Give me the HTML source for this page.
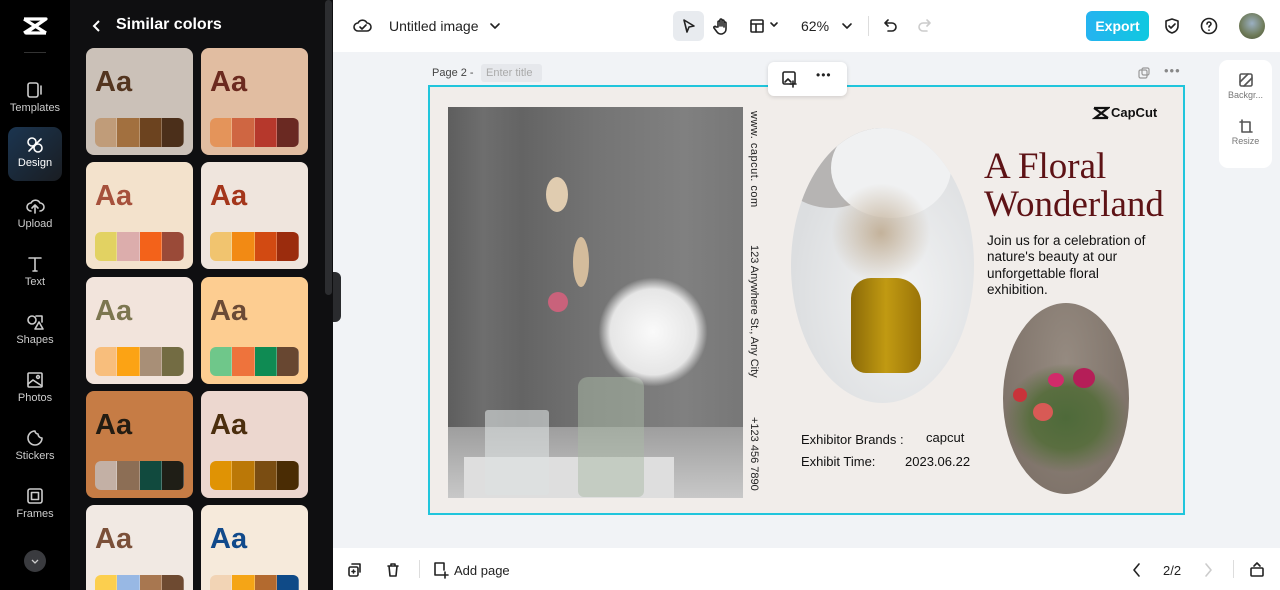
<!DOCTYPE html>
<html style="overflow:hidden;width:1280px;height:590px"><head><meta charset="utf-8"><style>
*{margin:0;padding:0;box-sizing:border-box}
body{width:1280px;height:590px;overflow:hidden;font-family:"Liberation Sans",sans-serif;background:#f1f3f6;position:relative}
.abs{position:absolute}
#side{left:0;top:0;width:70px;height:590px;background:#000}
.nav{position:absolute;left:8px;width:54px;height:54px;color:#ccc;font-size:11px;text-align:center}
.nav svg{display:block;margin:8px auto 2px}
#panel{left:70px;top:0;width:263px;height:590px;background:#0f0f11;overflow:hidden}
.card{position:absolute;width:107px;height:107px;border-radius:8px}
.card b{position:absolute;left:9px;top:18px;font-size:29px;font-weight:bold}
.sw{position:absolute;left:9px;top:70px;width:89px;height:29px;border-radius:6px;overflow:hidden;display:flex}
.sw i{flex:1;border-right:1px solid rgba(255,255,255,.25)}
#top{left:333px;top:0;width:947px;height:52px;background:#fff}
#bot{left:333px;top:548px;width:947px;height:42px;background:#fff}
.ic{stroke:#222;fill:none;stroke-width:1.6;stroke-linecap:round;stroke-linejoin:round}
</style></head><body>
<div id="side" class="abs">
 <svg class="abs" style="left:22px;top:16px" width="26" height="20" viewBox="0 0 26 20"><path d="M2 3h22L4 17h20M2 3l22 14M2 17L24 3" stroke="#fff" stroke-width="3.2" fill="none" stroke-linejoin="round"/></svg>
 <div class="abs" style="left:24px;top:52px;width:22px;height:1px;background:#333"></div>
 <div class="nav" style="top:72px"><svg width="20" height="20" class="ic" style="stroke:#ccc"><rect x="3" y="3" width="10" height="14" rx="2"/><path d="M16 6v8"/></svg>Templates</div>
 <div class="nav" style="top:127px;background:linear-gradient(135deg,#1b3550,#1a1d22);border-radius:9px;color:#fff"><svg width="20" height="20" class="ic" style="stroke:#fff"><circle cx="7" cy="7" r="4"/><circle cx="13" cy="13" r="4"/><path d="M4 16l12-12"/></svg>Design</div>
 <div class="nav" style="top:188px"><svg width="20" height="20" class="ic" style="stroke:#ccc"><path d="M6 15a4 4 0 010-8 5 5 0 019 0 4 4 0 010 8M10 9v8M7 12l3-3 3 3"/></svg>Upload</div>
 <div class="nav" style="top:246px"><svg width="20" height="20" class="ic" style="stroke:#ccc"><path d="M4 4h12M10 4v13M8 17h4"/></svg>Text</div>
 <div class="nav" style="top:304px"><svg width="20" height="20" class="ic" style="stroke:#ccc"><circle cx="7" cy="8" r="4"/><path d="M11 4h6v6M10 17l4-7 4 7z"/></svg>Shapes</div>
 <div class="nav" style="top:362px"><svg width="20" height="20" class="ic" style="stroke:#ccc"><rect x="3" y="3" width="14" height="14" rx="1"/><path d="M3 14l5-4 9 6"/><circle cx="13" cy="7" r="1.4"/></svg>Photos</div>
 <div class="nav" style="top:420px"><svg width="20" height="20" class="ic" style="stroke:#ccc"><path d="M10 3a7 7 0 107 7 4 4 0 01-4-4 3 3 0 01-3-3z"/></svg>Stickers</div>
 <div class="nav" style="top:478px"><svg width="20" height="20" class="ic" style="stroke:#ccc"><rect x="3" y="3" width="14" height="14" rx="2"/><rect x="6.5" y="6.5" width="7" height="7"/></svg>Frames</div>
 <div class="abs" style="left:24px;top:550px;width:22px;height:22px;border-radius:50%;background:#3a3b3f"><svg width="22" height="22" viewBox="0 0 22 22"><path d="M8 10l3 3 3-3" stroke="#ccc" fill="none" stroke-width="1.3"/></svg></div>
</div>
<div id="panel" class="abs">
 <svg class="abs" style="left:20px;top:18px" width="14" height="16"><path d="M9 3L4 8l5 5" stroke="#fff" stroke-width="2" fill="none"/></svg>
 <div class="abs" style="left:46px;top:16px;color:#fff;font-size:16px;font-weight:bold">Similar colors</div>
 <div class="abs" style="left:255px;top:0;width:7px;height:295px;background:#2c2d30;border-radius:4px"></div>
 <div class="card" style="left:16px;top:48px;background:#cbc1b8"><b style="color:#53351f">Aa</b><div class="sw"><i style="background:#c09c79"></i><i style="background:#a2703f"></i><i style="background:#6c431f"></i><i style="background:#4b2f1a"></i></div></div>
 <div class="card" style="left:131px;top:48px;background:#e1bda1"><b style="color:#6b2a1f">Aa</b><div class="sw"><i style="background:#e4945a"></i><i style="background:#cf6642"></i><i style="background:#b6382c"></i><i style="background:#6a2922"></i></div></div>
 <div class="card" style="left:16px;top:162px;background:#f3e2cc"><b style="color:#a6513c">Aa</b><div class="sw"><i style="background:#e2d262"></i><i style="background:#dcadac"></i><i style="background:#f3621a"></i><i style="background:#9a4a38"></i></div></div>
 <div class="card" style="left:131px;top:162px;background:#efe5dd"><b style="color:#a4361b">Aa</b><div class="sw"><i style="background:#f1c46f"></i><i style="background:#f28a14"></i><i style="background:#d24a12"></i><i style="background:#9b2c0d"></i></div></div>
 <div class="card" style="left:16px;top:277px;background:#f2e4dc"><b style="color:#7c7650">Aa</b><div class="sw"><i style="background:#f8be7c"></i><i style="background:#fca314"></i><i style="background:#a88f77"></i><i style="background:#736c43"></i></div></div>
 <div class="card" style="left:131px;top:277px;background:#fdcd91"><b style="color:#6b4a36">Aa</b><div class="sw"><i style="background:#6fc78a"></i><i style="background:#ee733c"></i><i style="background:#0f8b53"></i><i style="background:#684731"></i></div></div>
 <div class="card" style="left:16px;top:391px;background:#c67c45"><b style="color:#231c12">Aa</b><div class="sw"><i style="background:#c3b0a5"></i><i style="background:#8c6e55"></i><i style="background:#114a3e"></i><i style="background:#1f1e16"></i></div></div>
 <div class="card" style="left:131px;top:391px;background:#ecd7cf"><b style="color:#4b2e0e">Aa</b><div class="sw"><i style="background:#e09304"></i><i style="background:#bb7807"></i><i style="background:#7a4d12"></i><i style="background:#4a2c04"></i></div></div>
 <div class="card" style="left:16px;top:505px;background:#f1e9e3"><b style="color:#7b5039">Aa</b><div class="sw"><i style="background:#fccf4e"></i><i style="background:#98b8e4"></i><i style="background:#a87750"></i><i style="background:#6e4a31"></i></div></div>
 <div class="card" style="left:131px;top:505px;background:#f6eadb"><b style="color:#114a8b">Aa</b><div class="sw"><i style="background:#f2d4b5"></i><i style="background:#f5a516"></i><i style="background:#b36a2f"></i><i style="background:#0f4a87"></i></div></div>
</div>
<div class="abs" style="left:333px;top:272px;width:8px;height:50px;background:#2a2b2e;border-radius:0 6px 6px 0"></div>
<div id="top" class="abs">
 <svg class="abs" style="left:20px;top:16px" width="20" height="20"><path class="ic" d="M5 15a4 4 0 010-8 5 5 0 019 0 4 4 0 010 8z M7 11l2 2 4-4"/></svg>
 <div class="abs" style="left:56px;top:18px;font-size:14px;color:#222">Untitled image</div>
 <svg class="abs" style="left:156px;top:20px" width="12" height="12"><path class="ic" d="M2 4l4 4 4-4"/></svg>
 <div class="abs" style="left:340px;top:11px;width:31px;height:30px;background:#e8ebef;border-radius:6px"></div>
 <svg class="abs" style="left:347px;top:17px" width="18" height="18"><path class="ic" d="M4 3l10 6-5 1-2 5z"/></svg>
 <svg class="abs" style="left:379px;top:16px" width="20" height="20"><path class="ic" d="M6 11V6a1 1 0 012 0v4V4a1 1 0 012 0v6V5a1 1 0 012 0v6V7a1 1 0 012 0v6a5 5 0 01-9 3l-3-4a1 1 0 012-1z"/></svg>
 <svg class="abs" style="left:415px;top:17px" width="18" height="18"><rect class="ic" x="3" y="3" width="12" height="12" rx="1"/><path class="ic" d="M3 7h12M8 7v8"/></svg>
 <svg class="abs" style="left:436px;top:20px" width="10" height="10"><path class="ic" d="M2 3l3 3 3-3"/></svg>
 <div class="abs" style="left:468px;top:18px;font-size:14px;color:#222">62%</div>
 <svg class="abs" style="left:508px;top:20px" width="12" height="12"><path class="ic" d="M2 4l4 4 4-4"/></svg>
 <div class="abs" style="left:535px;top:16px;width:1px;height:20px;background:#ddd"></div>
 <svg class="abs" style="left:549px;top:16px" width="18" height="20"><path class="ic" d="M6 4L3 7l3 3M3 7h7a4 4 0 010 8H6"/></svg>
 <svg class="abs" style="left:582px;top:16px" width="18" height="20"><path class="ic" style="stroke:#ccc" d="M12 4l3 3-3 3M15 7H8a4 4 0 000 8h4"/></svg>
 <div class="abs" style="left:753px;top:11px;width:63px;height:30px;border-radius:6px;background:linear-gradient(90deg,#25b3f0,#10c8e0);color:#fff;font-weight:bold;font-size:14px;text-align:center;line-height:30px">Export</div>
 <svg class="abs" style="left:829px;top:16px" width="20" height="20"><path class="ic" d="M10 3l6 2v5c0 4-3 6-6 7-3-1-6-3-6-7V5z M7 10l2 2 4-4"/></svg>
 <svg class="abs" style="left:866px;top:16px" width="20" height="20"><circle class="ic" cx="10" cy="10" r="7.5"/><path class="ic" d="M8 8a2 2 0 114 0c0 1.5-2 1.5-2 3M10 14v.2"/></svg>
 <div class="abs" style="left:906px;top:13px;width:26px;height:26px;border-radius:50%;background:radial-gradient(circle at 50% 40%,#9bb0c2,#6e7a58 60%,#4a5238)"></div>
</div>
<div class="abs" style="left:432px;top:67px;font-size:11px;color:#444">Page 2 -</div>
<div class="abs" style="left:481px;top:64px;width:61px;height:18px;background:#e6e8ec;border-radius:3px;font-size:11px;color:#aaa;line-height:18px;padding-left:5px">Enter title</div>
<svg class="abs" style="left:1137px;top:66px" width="14" height="14"><rect class="ic" style="stroke:#999;stroke-width:1.2" x="2" y="4" width="8" height="8" rx="1.5"/><rect class="ic" style="stroke:#999;stroke-width:1.2" x="5" y="2" width="7" height="7" rx="1.5"/></svg>
<div class="abs" style="left:1164px;top:63px;font-size:13px;color:#888;letter-spacing:1px">•••</div>
<div class="abs" style="left:1219px;top:60px;width:53px;height:108px;background:#fff;border-radius:9px;font-size:9px;color:#777;text-align:center">
 <svg style="display:block;margin:12px auto 2px" width="16" height="16"><rect class="ic" style="stroke:#555" x="2" y="2" width="12" height="12" rx="1.5"/><path class="ic" style="stroke:#555" d="M2 10l8-8M6 14l8-8"/></svg>Backgr...
 <svg style="display:block;margin:18px auto 2px" width="16" height="16"><path class="ic" style="stroke:#555" d="M4 2v12h10M2 4h10v10"/></svg>Resize
</div>
<div class="abs" style="left:428px;top:85px;width:757px;height:430px;border:2px solid #20c5dc;background:#f1edea;overflow:hidden">
 <div class="abs" style="left:18px;top:20px;width:295px;height:391px;background:linear-gradient(90deg,#5e5e5e 0%,#6e6e6e 12%,#646464 25%,#747474 50%,#808080 80%,#777 100%);overflow:hidden">
  <div class="abs" style="left:0;top:320px;width:295px;height:71px;background:linear-gradient(180deg,#9e9e9e,#c8c8c8)"></div>
  <div class="abs" style="left:16px;top:350px;width:210px;height:41px;background:#dedede"></div>
  <div class="abs" style="left:37px;top:303px;width:64px;height:85px;background:rgba(220,225,225,.6);border-radius:3px"></div>
  <div class="abs" style="left:130px;top:270px;width:66px;height:120px;background:rgba(170,185,165,.5);border-radius:10px 10px 6px 6px"></div>
  <div class="abs" style="left:150px;top:170px;width:110px;height:110px;border-radius:50%;background:radial-gradient(#fafafa,#e6e6e6 55%,rgba(255,255,255,0) 70%)"></div>
  <div class="abs" style="left:100px;top:185px;width:20px;height:20px;border-radius:50%;background:#c9627b"></div>
  <div class="abs" style="left:98px;top:70px;width:22px;height:35px;border-radius:50%;background:#e0ccb0"></div>
  <div class="abs" style="left:125px;top:130px;width:16px;height:50px;border-radius:50%;background:#d4bc9c"></div>
 </div>
 <div class="abs" style="left:318px;top:24px;font-size:11px;color:#222;writing-mode:vertical-rl;letter-spacing:.5px">www. capcut. com</div>
 <div class="abs" style="left:318px;top:158px;font-size:11px;color:#222;writing-mode:vertical-rl">123 Anywhere St., Any City</div>
 <div class="abs" style="left:318px;top:330px;font-size:11px;color:#222;writing-mode:vertical-rl">+123 456 7890</div>
 <div class="abs" style="left:361px;top:41px;width:183px;height:275px;border-radius:50%;background:radial-gradient(ellipse at 60% 60%,#f2f3f4,#dcdee0 70%);overflow:hidden">
  <div class="abs" style="left:-20px;top:-30px;width:120px;height:110px;border-radius:50%;background:#b6b4b3"></div>
  <div class="abs" style="left:40px;top:-10px;width:120px;height:100px;border-radius:50%;background:#f0f1f2"></div>
  <div class="abs" style="left:60px;top:150px;width:70px;height:95px;background:linear-gradient(90deg,#8b6a08,#c19a12,#9a7408);border-radius:20px 25px 15px 15px"></div>
  <div class="abs" style="left:40px;top:55px;width:100px;height:100px;border-radius:50%;background:radial-gradient(rgba(170,140,100,.6),rgba(200,180,150,0) 70%)"></div>
 </div>
 <div class="abs" style="left:573px;top:216px;width:126px;height:191px;border-radius:50%;background:radial-gradient(ellipse at 50% 30%,#958a80,#776b62);overflow:hidden">
  <div class="abs" style="left:0;top:60px;width:126px;height:110px;background:radial-gradient(ellipse,#4e6a3a 0%,#5a6e40 40%,rgba(110,100,90,0) 70%)"></div>
  <div class="abs" style="left:30px;top:100px;width:20px;height:18px;border-radius:50%;background:#d85a55"></div>
  <div class="abs" style="left:70px;top:65px;width:22px;height:20px;border-radius:50%;background:#b51e58"></div>
  <div class="abs" style="left:45px;top:70px;width:16px;height:14px;border-radius:50%;background:#d12b6a"></div>
  <div class="abs" style="left:10px;top:85px;width:14px;height:14px;border-radius:50%;background:#c9333a"></div>
 </div>
 <div class="abs" style="left:554px;top:61px;font-family:'Liberation Serif',serif;font-size:37px;line-height:38px;color:#5e1316;white-space:nowrap">A Floral<br>Wonderland</div>
 <div class="abs" style="left:557px;top:146px;font-size:13.5px;line-height:16.3px;color:#111;width:168px">Join us for a celebration of nature's beauty at our unforgettable floral exhibition.</div>
 <div class="abs" style="left:371px;top:345px;font-size:13px;color:#111">Exhibitor Brands :</div>
 <div class="abs" style="left:496px;top:343px;font-size:13px;color:#111">capcut</div>
 <div class="abs" style="left:371px;top:367px;font-size:13px;color:#111">Exhibit Time:</div>
 <div class="abs" style="left:475px;top:367px;font-size:13px;color:#111">2023.06.22</div>
 <svg class="abs" style="left:662px;top:19px" width="18" height="14" viewBox="0 0 18 14"><path d="M2 2h14L3 12h13M2 2l14 10" stroke="#111" stroke-width="2.2" fill="none"/></svg>
 <div class="abs" style="left:681px;top:18px;font-size:13px;font-weight:bold;color:#111">CapCut</div>
</div>
<div class="abs" style="left:768px;top:62px;width:79px;height:34px;background:#fff;border-radius:6px;box-shadow:0 1px 4px rgba(0,0,0,.15)">
 <svg class="abs" style="left:13px;top:8px" width="18" height="18"><rect class="ic" x="2" y="2" width="12" height="12" rx="1.5"/><path class="ic" d="M4 12l3-3 3 3M12 11v6M9 14h6"/></svg>
 <div class="abs" style="left:48px;top:6px;font-size:12px;letter-spacing:1px;color:#222">•••</div>
</div>
<div id="bot" class="abs">
 <svg class="abs" style="left:14px;top:14px" width="16" height="16"><rect class="ic" x="2" y="5" width="9" height="9" rx="1.5"/><path class="ic" d="M5 2h8v8M5 9.5h3M6.5 8v3"/></svg>
 <svg class="abs" style="left:52px;top:14px" width="16" height="16"><path class="ic" d="M3 4h10M6 4V2h4v2M4 4l1 10h6l1-10"/></svg>
 <div class="abs" style="left:86px;top:12px;width:1px;height:18px;background:#ddd"></div>
 <svg class="abs" style="left:99px;top:13px" width="18" height="18"><path class="ic" d="M10 14H3V2h9v7M13 11v6M10 14h6"/></svg>
 <div class="abs" style="left:121px;top:15px;font-size:13px;color:#222">Add page</div>
 <svg class="abs" style="left:798px;top:14px" width="12" height="16"><path class="ic" d="M8 2L3 8l5 6"/></svg>
 <div class="abs" style="left:830px;top:15px;font-size:13px;color:#222">2/2</div>
 <svg class="abs" style="left:869px;top:14px" width="12" height="16"><path class="ic" style="stroke:#ccc" d="M4 2l5 6-5 6"/></svg>
 <div class="abs" style="left:900px;top:12px;width:1px;height:18px;background:#ddd"></div>
 <svg class="abs" style="left:915px;top:12px" width="18" height="18"><rect class="ic" x="3" y="8" width="12" height="8" rx="1"/><path class="ic" d="M6 6l3-3 3 3"/></svg>
</div>
</body></html>
